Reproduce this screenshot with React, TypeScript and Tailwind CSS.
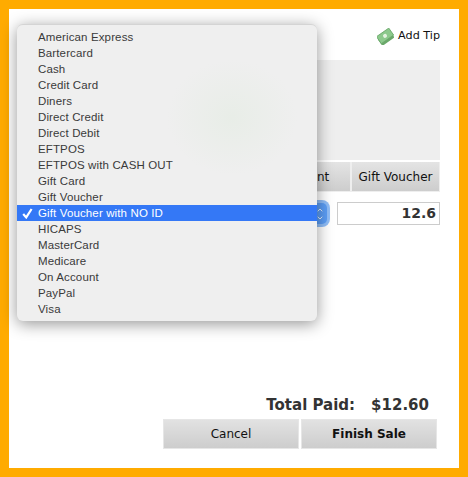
// Экран оплаты: список способов оплаты раскрыт поверх формы.
import { ChevronDown, ChevronUp } from "lucide-react";

const methods = [
  "American Express",
  "Bartercard",
  "Cash",
  "Credit Card",
  "Diners",
  "Direct Credit",
  "Direct Debit",
  "EFTPOS",
  "EFTPOS with CASH OUT",
  "Gift Card",
  "Gift Voucher",
  "Gift Voucher with NO ID",
  "HICAPS",
  "MasterCard",
  "Medicare",
  "On Account",
  "PayPal",
  "Visa",
];

const selected = "Gift Voucher with NO ID";

function MoneyIcon() {
  return (
    <svg width="17" height="17" viewBox="0 0 17 17" className="shrink-0">
      <g transform="rotate(-35 8.5 8.5)">
        <rect x="0.5" y="6.5" width="15" height="8" fill="#6aa86a" />
        <rect x="1" y="3.5" width="15" height="8.5" fill="#8cc98c" stroke="#6aa86a" strokeWidth="0.8" />
        <circle cx="8.5" cy="7.7" r="2" fill="#e4f3e0" />
      </g>
    </svg>
  );
}

function Tab({ label, className }: { label?: string; className: string }) {
  return (
    <div
      className={`flex h-[29px] items-center justify-center bg-gradient-to-b from-[#e4e4e4] to-[#cdcdcd] text-[12px] text-[#111] ${className}`}
    >
      {label}
    </div>
  );
}

function MethodMenu() {
  return (
    <div className="absolute left-[8px] top-[15px] w-[300px] overflow-hidden rounded-[6px] border-t border-[#d4d4d4] bg-[#efefef] pb-[4px] pt-[4px] font-['Liberation_Sans',sans-serif] text-[11.5px] leading-[16px] tracking-[0.13px] text-[#3a3a3a] shadow-[0_3px_16px_rgba(0,0,0,0.42)]">
      <div className="pointer-events-none absolute left-[150px] top-[35px] h-[115px] w-[130px] bg-[radial-gradient(closest-side,#e8ede7,transparent)]" />
      {methods.map((name) =>
        name === selected ? (
          <div key={name} className="relative h-[16px] bg-[#3478f6] pl-[21px] text-white">
            <svg width="11" height="11" viewBox="0 0 11 11" className="absolute left-[5px] top-[3px]">
              <path d="M1.2 6 L4.2 9.4 L9.6 1" fill="none" stroke="white" strokeWidth="2.2" />
            </svg>
            {name}
          </div>
        ) : (
          <div key={name} className="relative h-[16px] pl-[21px]">
            {name}
          </div>
        ),
      )}
    </div>
  );
}

export default function App() {
  return (
    <div className="relative h-[477px] w-[468px] border-[9px] border-[#ffab00] bg-white font-['DejaVu_Sans',sans-serif]">
      <div className="flex justify-end pr-[19px] pt-[19px]">
        <div className="flex h-[17px] items-center gap-[4px] text-[11.2px] text-[#111]">
          <MoneyIcon />
          Add Tip
        </div>
      </div>

      <div className="mx-[19px] mt-[15px] h-[100px] bg-[#eeeeee]" />

      <div className="mx-[19px] mt-[2px] flex gap-[2px] bg-[#eeeeee] pb-[1px] pr-[1px]">
        <Tab className="flex-1" />
        <Tab label="Account" className="w-[90px]" />
        <Tab label="Gift Voucher" className="w-[87px]" />
      </div>

      <div className="mx-[19px] mt-[10px] flex items-center justify-between">
        <div className="flex h-[21px] w-[299px] justify-end rounded-[5px] bg-[#5b9df5] ring-[3px] ring-[#8fbdf7]">
          <div className="flex w-[14px] flex-col items-center justify-center text-white">
            <ChevronUp size={8} strokeWidth={2.5} />
            <ChevronDown size={8} strokeWidth={2.5} />
          </div>
        </div>
        <div className="flex h-[23px] w-[103px] items-center justify-end border border-[#cccccc] pr-[3px] text-[14px] font-bold text-[#333]">
          12.6
        </div>
      </div>

      <div className="mt-[171px] flex justify-end gap-[16px] pr-[30px] text-[15px] font-bold leading-[18px] text-[#333]">
        <span>Total Paid:</span>
        <span>$12.60</span>
      </div>

      <div className="ml-[154px] mt-[5px] flex w-[274px] gap-[2px]">
        <button className="flex h-[30px] flex-1 items-center justify-center border border-[#e6e6e6] bg-gradient-to-b from-[#e2e2e2] to-[#cdcdcd] text-[12px] text-[#111]">
          Cancel
        </button>
        <button className="flex h-[30px] flex-1 items-center justify-center border border-[#e6e6e6] bg-gradient-to-b from-[#e2e2e2] to-[#cdcdcd] text-[12px] font-bold text-[#111]">
          Finish Sale
        </button>
      </div>

      <MethodMenu />
    </div>
  );
}
